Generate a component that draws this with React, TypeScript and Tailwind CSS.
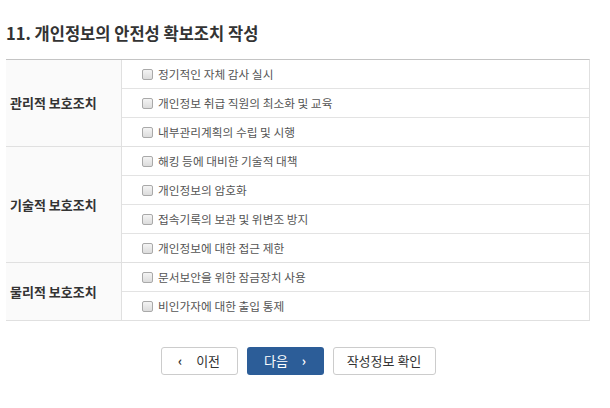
import React from "react";

const groups = [
  {
    title: "관리적 보호조치",
    items: ["정기적인 자체 감사 실시", "개인정보 취급 직원의 최소화 및 교육", "내부관리계획의 수립 및 시행"],
  },
  {
    title: "기술적 보호조치",
    items: ["해킹 등에 대비한 기술적 대책", "개인정보의 암호화", "접속기록의 보관 및 위변조 방지", "개인정보에 대한 접근 제한"],
  },
  {
    title: "물리적 보호조치",
    items: ["문서보안을 위한 잠금장치 사용", "비인가자에 대한 출입 통제"],
  },
];

const font = { fontFamily: '"Noto Sans CJK KR", "Noto Sans", sans-serif' };

const CheckItem = ({ label }: { label: string }) => (
  <label className="flex h-[29px] items-center gap-[5px] border-b border-[#e3e3e3] pl-[20px] last:h-[28px] last:border-b-0">
    <span className="h-[11px] w-[11px] rounded-[2px] border border-[#a9a9a9] bg-gradient-to-b from-[#f4f4f4] to-[#dcdcdc]"></span>
    <span className="text-[11.7px] text-[#555]">{label}</span>
  </label>
);

export default function App() {
  return (
    <div className="w-[610px] h-[408px] bg-white" style={font}>
      <div className="w-[584px] ml-[6px]">
        <h2 className="pt-[22px] pb-[15px] text-[16.5px] font-bold leading-[22px] text-[#333]">
          11. 개인정보의 안전성 확보조치 작성
        </h2>
        <div className="border-t border-t-[#c4c4c4] border-r border-r-[#e0e0e0] border-b border-b-[#e0e0e0]">
          {groups.map((g) => (
            <div key={g.title} className="flex border-b border-[#e0e0e0] last:border-b-0">
              <div className="flex w-[116px] items-center border-r border-[#e0e0e0] bg-[#fafafa] pl-[4px] text-[13px] font-bold text-[#333]">
                {g.title}
              </div>
              <div className="flex-1">
                {g.items.map((it) => (
                  <CheckItem key={it} label={it} />
                ))}
              </div>
            </div>
          ))}
        </div>
        <div className="mt-[26px] flex justify-center gap-[9px]">
          <button className="flex h-[28px] w-[77px] items-center justify-center gap-[14px] rounded-[3px] border border-[#cccccc] bg-white text-[13px] text-[#333]">
            <span className="text-[13px] font-bold">‹</span>
            <span>이전</span>
          </button>
          <button className="flex h-[28px] w-[77px] items-center justify-center gap-[14px] rounded-[3px] bg-[#2c5d98] text-[13px] text-white">
            <span>다음</span>
            <span className="text-[13px] font-bold">›</span>
          </button>
          <button className="flex h-[28px] w-[103px] items-center justify-center rounded-[3px] border border-[#cccccc] bg-white text-[13px] text-[#333]">
            작성정보 확인
          </button>
        </div>
      </div>
    </div>
  );
}
